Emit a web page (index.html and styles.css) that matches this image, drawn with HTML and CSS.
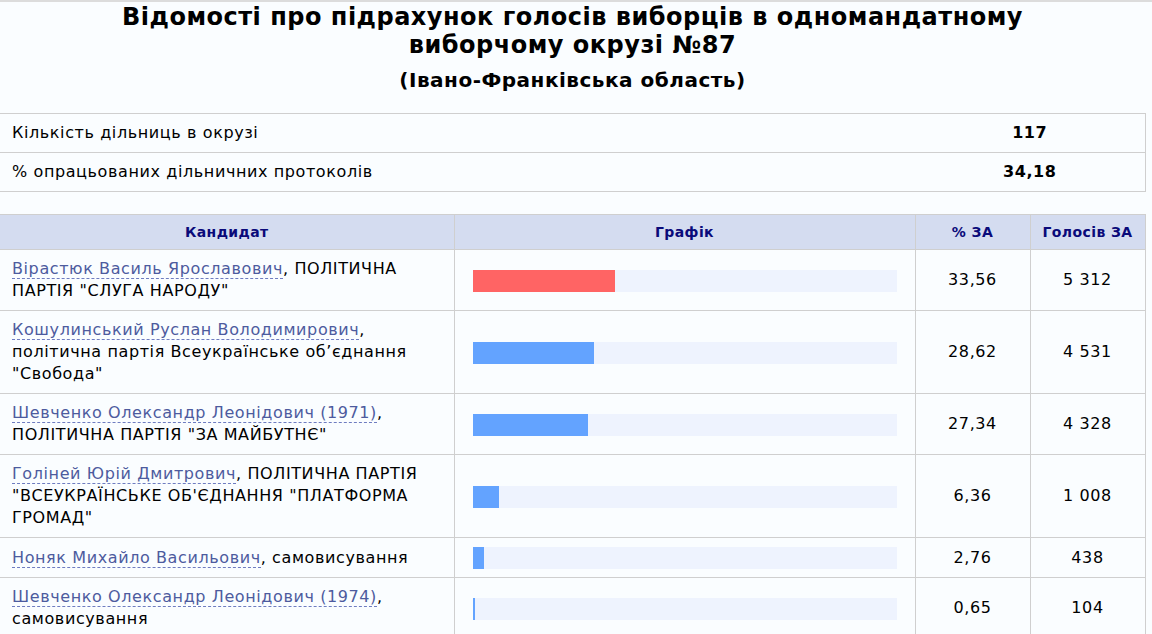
FILE: index.html
```html
<!DOCTYPE html>
<html lang="uk">
<head>
<meta charset="utf-8">
<title>Відомості про підрахунок голосів</title>
<link rel="stylesheet" href="styles.css">
</head>
<body>
<div class="page">
  <h1 class="title">Відомості про підрахунок голосів виборців в одномандатному виборчому окрузі №87</h1>
  <h2 class="subtitle">(Івано-Франківська область)</h2>

  <table class="info">
    <colgroup><col class="info-label"><col class="info-value"></colgroup>
    <tr><td>Кількість дільниць в окрузі</td><td class="val">117</td></tr>
    <tr><td>% опрацьованих дільничних протоколів</td><td class="val">34,18</td></tr>
  </table>

  <table class="results">
    <colgroup><col class="c-cand"><col class="c-graph"><col class="c-pct"><col class="c-votes"></colgroup>
    <thead>
      <tr><th>Кандидат</th><th>Графік</th><th>% ЗА</th><th>Голосів ЗА</th></tr>
    </thead>
    <tbody>
      <tr>
        <td class="cand"><a class="name">Вірастюк Василь Ярославович</a>, ПОЛІТИЧНА ПАРТІЯ "СЛУГА НАРОДУ"</td>
        <td class="graph"><div class="track"><div class="fill red" style="width:33.56%"></div></div></td>
        <td class="num">33,56</td><td class="num">5 312</td>
      </tr>
      <tr>
        <td class="cand"><a class="name">Кошулинський Руслан Володимирович</a>, політична партія Всеукраїнське об’єднання "Свобода"</td>
        <td class="graph"><div class="track"><div class="fill blue" style="width:28.62%"></div></div></td>
        <td class="num">28,62</td><td class="num">4 531</td>
      </tr>
      <tr>
        <td class="cand"><a class="name">Шевченко Олександр Леонідович (1971)</a>, ПОЛІТИЧНА ПАРТІЯ "ЗА МАЙБУТНЄ"</td>
        <td class="graph"><div class="track"><div class="fill blue" style="width:27.34%"></div></div></td>
        <td class="num">27,34</td><td class="num">4 328</td>
      </tr>
      <tr>
        <td class="cand"><a class="name">Голіней Юрій Дмитрович</a>, ПОЛІТИЧНА ПАРТІЯ "ВСЕУКРАЇНСЬКЕ ОБ'ЄДНАННЯ "ПЛАТФОРМА ГРОМАД"</td>
        <td class="graph"><div class="track"><div class="fill blue" style="width:6.36%"></div></div></td>
        <td class="num">6,36</td><td class="num">1 008</td>
      </tr>
      <tr>
        <td class="cand"><a class="name">Ноняк Михайло Васильович</a>, самовисування</td>
        <td class="graph"><div class="track"><div class="fill blue" style="width:2.76%"></div></div></td>
        <td class="num">2,76</td><td class="num">438</td>
      </tr>
      <tr>
        <td class="cand"><a class="name">Шевченко Олександр Леонідович (1974)</a>, самовисування</td>
        <td class="graph"><div class="track"><div class="fill blue" style="width:0.65%"></div></div></td>
        <td class="num">0,65</td><td class="num">104</td>
      </tr>
    </tbody>
  </table>
</div>
</body>
</html>
```

FILE: styles.css
```css
html, body {
  margin: 0;
  padding: 0;
  background: #fafdff;
}
body {
  font-family: "DejaVu Sans", Verdana, sans-serif;
  color: #000;
  border-top: 2px solid #dcdcdc;
  letter-spacing: 0.6px;
}
.page {
  width: 1145px;
}
.title {
  margin: 0 auto;
  padding-top: 1px;
  width: 960px;
  text-align: center;
  font-size: 24px;
  line-height: 28px;
  font-weight: bold;
  letter-spacing: 0.5px;
}
.subtitle {
  margin: 9px 0 0;
  text-align: center;
  font-size: 20px;
  line-height: 24px;
  font-weight: bold;
  letter-spacing: 0.5px;
}
table {
  border-collapse: collapse;
  table-layout: fixed;
  width: 1145px;
}
.info {
  margin-top: 21px;
}
.info-label { width: 915px; }
.info-value { width: 230px; }
.info td {
  border-top: 1px solid #cfcfcf;
  border-bottom: 1px solid #cfcfcf;
  border-right: 1px solid #cfcfcf;
  padding: 9px 12px;
  font-size: 16px;
  line-height: 20px;
}
.info td.val {
  text-align: center;
  font-weight: bold;
}
.info td:first-child { border-right: none; }

.results {
  margin-top: 22px;
}
.c-cand { width: 454px; }
.c-graph { width: 461px; }
.c-pct { width: 115px; }
.c-votes { width: 115px; }
.results th {
  background: #d4dcf0;
  color: #0a0a7a;
  font-size: 14px;
  line-height: 18px;
  font-weight: bold;
  padding: 8px 6px;
  border: 1px solid #cfcfcf;
  text-align: center;
  letter-spacing: 0.4px;
}
.results th:first-child, .results td:first-child { border-left: none; }
.results td {
  border: 1px solid #cfcfcf;
  font-size: 16px;
  line-height: 22px;
  padding: 8px 12px;
  vertical-align: middle;
}
.cand {
  text-align: left;
}
.name {
  color: #4d5b9e;
  text-decoration: none;
  border-bottom: 1px dashed #6e7cc0;
}
.graph {
  padding: 9px 18px 8px 18px !important;
}
.track {
  height: 22px;
  background: #eef3fe;
  display: flex;
}
.fill {
  height: 22px;
}
.red { background: #ff6464; }
.blue { background: #63a3ff; }
.num {
  text-align: center;
}
```
